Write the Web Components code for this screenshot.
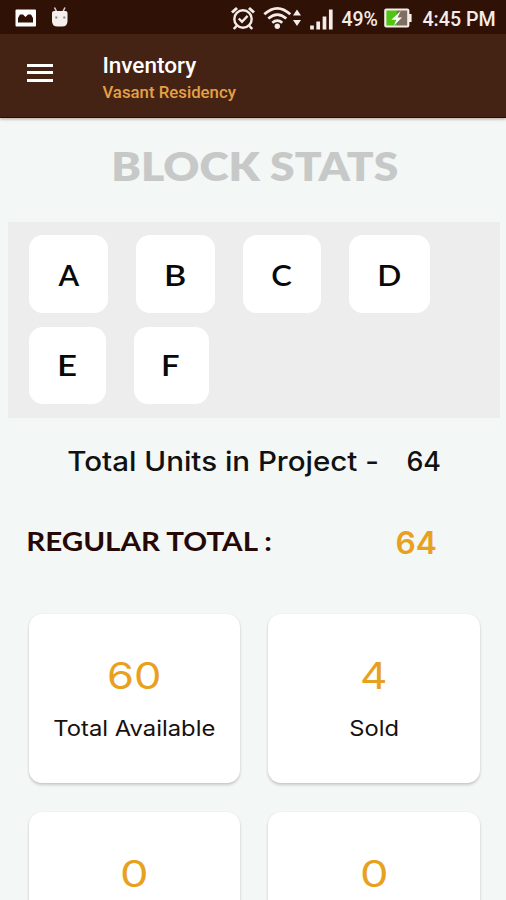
<!DOCTYPE html>
<html lang="en">
<head>
<meta charset="utf-8">
<title>Inventory</title>
<style>
html,body{margin:0;height:900px;overflow:hidden;background:#f3f7f6}
body{font-family:Montserrat,Lato,"Open Sans",sans-serif;color:#111}
</style>
</head>
<body>
<inventory-app></inventory-app>
<script>
// Single-line label sized by cap height and overall ink width.
class FitText extends HTMLElement {
  connectedCallback() {
    const cap = +this.getAttribute('cap'), w = +this.getAttribute('w');
    const wt = this.getAttribute('weight') || 400;
    const fam = this.getAttribute('font') || 'Lato';
    const root = this.attachShadow({mode: 'open'});
    const c = document.createElement('canvas').getContext('2d');
    c.font = `${wt} 100px ${fam}`;
    const size = cap / c.measureText('H').actualBoundingBoxAscent * 100;
    c.font = `${wt} ${size}px ${fam}`;
    const m = c.measureText(this.textContent.trim());
    const s = w / (m.actualBoundingBoxRight + m.actualBoundingBoxLeft);
    const tx = m.actualBoundingBoxLeft * s + .4;
    const ty = cap / 2 - (m.fontBoundingBoxAscent - m.fontBoundingBoxDescent) / 2 + (fam === 'Roboto' ? 0 : .7);
    root.innerHTML = `<style>
      :host{display:block;flex:none;width:${w}px;height:${cap}px;white-space:nowrap;font:${wt} ${size}px/${cap}px ${fam},sans-serif}
      span{display:inline-block;vertical-align:top;transform-origin:0 0;transform:translate(${tx}px,${ty}px) scaleX(${s})}
    </style><span><slot></slot></span>`;
  }
}
customElements.define('fit-text', FitText);

const define = (name, html) => {
  const t = document.createElement('template');
  t.innerHTML = html;
  customElements.define(name, class extends HTMLElement {
    constructor() {
      super();
      this.attachShadow({mode: 'open'}).append(t.content.cloneNode(true));
    }
  });
};

define('status-bar', `<style>
:host{display:flex;height:34px;background:#301106;color:#f3ece8;box-sizing:border-box}
svg{display:block;flex:none}
fit-text{margin-top:12px}
</style>
<svg width="230" height="34" viewBox="0 0 230 34">
  <rect x="15.5" y="9.5" width="20.5" height="17" rx="1" fill="#fff"/>
  <path d="M18 22.500v-4.500l2-3.500h3l2.500 2.500 2.500-2.500h3l2 3.500v4.500z" fill="#301106"/>
  <path d="M54.500 7.500l2 4M65 7.500l-2 4" stroke="#d8d0c8" stroke-width="1.600"/>
  <path d="M52 13q0-2 2-2h11.500q2 0 2 2v8q0 5.500-5.500 5.500h-4.500q-5.500 0-5.500-5.500z" fill="#f5f0ec"/>
  <path d="M55.300 17.500h2M63.300 17.500h2" stroke="#8d8179" stroke-width="2.200"/>
</svg>
<svg width="110.700" height="34" viewBox="230 0 110.700 34" fill="none" stroke="#f3ece8">
  <circle cx="243" cy="19" r="8.700" stroke-width="2.400"/>
  <path d="M232 12.500l5-4.500M254 12.500l-5-4.500" stroke-width="3"/>
  <path d="M236.500 26l-2.700 3M249.500 26l2.700 3" stroke-width="2.600"/>
  <path d="M238.800 18.500l3.200 3.400 5.600-6" stroke-width="2.300"/>
  <path d="M264.300 14.300q13-12 26 0M268.300 18.600q9-8 18 0M272.300 22.700q5-4.200 10 0" stroke-width="2.700"/>
  <circle cx="277.300" cy="26.300" r="2.700" fill="#f3ece8" stroke="none"/>
  <path d="M293 15.500l4-6 4 6zM293 20l4 6 4-6z" fill="#f3ece8" stroke="none"/>
  <path d="M312 25.500v4M318.200 21.500v8M324.500 16.500v13M330.800 9.500v20" stroke-width="3.700"/>
</svg>
<fit-text cap="14.2" w="36" weight="500" font="Roboto">49%</fit-text>
<svg width="45.800" height="34" viewBox="376.700 0 45.800 34">
  <rect x="385" y="9.500" width="23" height="17" fill="#806e61"/>
  <rect x="385" y="9.500" width="11.500" height="17" fill="#50c514"/>
  <rect x="385" y="9.500" width="23" height="17" rx="1" fill="none" stroke="#f3ece8" stroke-width="2.200"/>
  <rect x="408.500" y="14" width="2.800" height="8" fill="#f3ece8"/>
  <path d="M400.500 11l-9.500 8.700h5l-2.500 5.800 8.300-8h-4.600z" fill="#fff"/>
</svg>
<fit-text cap="14.2" w="72" weight="500" font="Roboto">4:45 PM</fit-text>`);

define('app-bar', `<style>
:host{display:flex;height:84px;box-sizing:border-box;background:#452314;border-bottom:1.500px solid #2e0d05;box-shadow:0 1px 3px #52201266;z-index:1}
.menu{width:26.500px;margin:29.500px 49.500px 0 26.500px;display:flex;flex-direction:column;gap:4.500px}
.menu i{height:3.200px;background:#fff}
.titles{padding-top:23px;display:flex;flex-direction:column;gap:12.500px}
.main{color:#fff}.sub{color:#e5a043;margin-left:-.5px}
</style>
<div class="menu"><i></i><i></i><i></i></div>
<div class="titles">
<fit-text class="main" cap="16" w="93" weight="500" font="Roboto">Inventory</fit-text>
<fit-text class="sub" cap="12.5" w="134" weight="500" font="Roboto">Vasant Residency</fit-text></div>`);

define('block-tile', `<style>
:host{display:flex;flex:none;justify-content:center;height:77.500px;padding-top:28.500px;box-sizing:border-box;border-radius:14px;background:#fff;color:#090909}
</style><slot></slot>`);

define('block-panel', `<style>
:host{display:flex;flex-direction:column;gap:14px;box-sizing:border-box;height:196px;margin:40.500px 6px 0 8px;padding:13.500px 20.500px;background:#ededed}
.row{display:flex}
</style>
<div class="row">
<block-tile style="width:79.500px;margin-right:28px"><fit-text cap="21.5" w="22.500" weight="600">A</fit-text></block-tile>
<block-tile style="width:79px;margin-right:27.500px"><fit-text cap="21.5" w="18.500" weight="600">B</fit-text></block-tile>
<block-tile style="width:78.500px;margin-right:27.500px"><fit-text cap="21.5" w="20" weight="600">C</fit-text></block-tile>
<block-tile style="width:81.500px"><fit-text cap="21.5" w="21.500" weight="600">D</fit-text></block-tile>
</div>
<div class="row">
<block-tile style="width:77.500px;margin-right:27.500px"><fit-text cap="21" w="17" weight="600">E</fit-text></block-tile>
<block-tile style="width:75px"><fit-text cap="21" w="16" weight="600">F</fit-text></block-tile>
</div>`);

define('stat-card', `<style>
:host{display:flex;flex-direction:column;align-items:center;gap:33px;box-sizing:border-box;height:169.500px;padding-top:47.500px;border-radius:13px;background:#fff;box-shadow:0 2px 3px #0000002e,0 0 2px #00000012}
::slotted([slot=value]){color:#e8a11f}
::slotted([slot=label]){color:#17110f}
</style><slot name="value"></slot><slot name="label"></slot>`);

define('inventory-app', `<style>
:host{display:flex;flex-direction:column;width:506px;height:900px;overflow:hidden;background:#f3f7f6}
status-bar,app-bar,block-panel{flex:none}
.heading{margin:33px 0 0 112.500px;color:#c7c9c8}
.units{display:flex;gap:30px;margin:34.500px 0 0 67.500px}
.regular{display:flex;justify-content:space-between;align-items:center;margin:58px 70.500px 0 27.500px}
.name{color:#260806}.count{color:#e8a11f}
.cards{display:grid;grid-template-columns:211.500px 211.500px;gap:28.500px 28px;margin:61px 0 0 28.500px}
</style>
<status-bar></status-bar>
<app-bar></app-bar>
<fit-text class="heading" cap="30" w="284.500" weight="800">BLOCK STATS</fit-text>
<block-panel></block-panel>
<div class="units"><fit-text cap="19.5" w="309" weight="500" font="Inter">Total Units in Project -</fit-text><fit-text cap="19.5" w="33" weight="500" font="Inter">64</fit-text></div>
<div class="regular"><fit-text class="name" cap="19" w="244.500" weight="700">REGULAR TOTAL :</fit-text><fit-text class="count" cap="23" w="39.500" weight="600" font="Inter">64</fit-text></div>
<div class="cards">
<stat-card><fit-text slot="value" cap="27" w="50.500" font="Inter">60</fit-text><fit-text slot="label" cap="15.5" w="160.500" font="Inter">Total Available</fit-text></stat-card>
<stat-card><fit-text slot="value" cap="27" w="23" font="Inter">4</fit-text><fit-text slot="label" cap="15.5" w="47.500" font="Inter">Sold</fit-text></stat-card>
<stat-card><fit-text slot="value" cap="27" w="24.500" font="Inter">0</fit-text></stat-card>
<stat-card><fit-text slot="value" cap="27" w="24.500" font="Inter">0</fit-text></stat-card>
</div>`);
</script>
</body>
</html>
